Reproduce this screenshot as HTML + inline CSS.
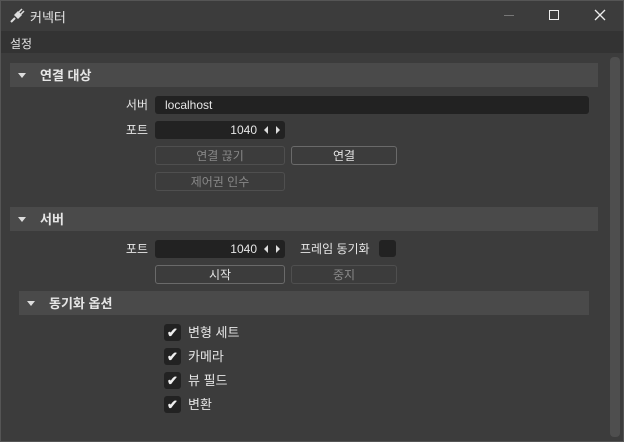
<!DOCTYPE html>
<html><head><meta charset="utf-8"><style>
*{box-sizing:border-box;margin:0;padding:0}
body{width:624px;height:442px;background:#3c3c3c;font-family:"Liberation Sans","Noto Sans CJK KR",sans-serif;font-size:12px;color:#e6e6e6;position:relative;overflow:hidden}
.a{position:absolute}
.win{left:0;top:0;width:624px;height:442px;border:1px solid #555}
.title{left:1px;top:1px;width:622px;height:30px;background:#3c3c3c}
.menu{left:1px;top:31px;width:622px;height:22px;background:#333}
.hdr{background:#4a4a4a;height:24px;font-weight:bold;font-size:13px;line-height:25px}
.tri{display:inline-block;width:0;height:0;border-left:4px solid transparent;border-right:4px solid transparent;border-top:5px solid #ddd;vertical-align:middle;margin:0 14px 2px 8px}
.inp{background:#222;border-radius:3px;height:18px;line-height:19px}
.btn{border:1px solid #6a6a6a;border-radius:3px;height:19px;line-height:18px;text-align:center;color:#e6e6e6}
.dis{border-color:#4f4f4f;color:#888}
.lbl{text-align:right;width:100px;line-height:19px}
.cb{width:17px;height:17px;background:#222;border-radius:3px;color:#eee;font-size:13px;text-align:center;line-height:17px;font-weight:bold}
</style></head><body>
<div class="a win"></div>
<div class="a title"></div>
<svg class="a" style="left:9px;top:8px" width="16" height="16" viewBox="0 0 16 16"><path d="M2 14 L6 10" stroke="#ddd" stroke-width="2"/><path d="M5 7 L9 3 L13 7 L9 11 Z" fill="#ddd"/><path d="M10 4 L13 1 M12 6 L15 3" stroke="#ddd" stroke-width="1.5"/></svg>
<div class="a" style="left:30px;top:7px;font-size:13px">커넥터</div>
<div class="a" style="left:504px;top:15px;width:10px;height:1px;background:#777"></div>
<div class="a" style="left:549px;top:10px;width:10px;height:10px;border:1.5px solid #eee"></div>
<svg class="a" style="left:594px;top:9px" width="12" height="12"><path d="M1 1L11 11M11 1L1 11" stroke="#eee" stroke-width="1.3"/></svg>
<div class="a menu"></div>
<div class="a" style="left:10px;top:35px">설정</div>
<div class="a" style="left:610px;top:57px;width:10px;height:380px;background:#4e4e4e;border-radius:4px"></div>

<div class="a hdr" style="left:10px;top:63px;width:588px"><span class="tri"></span>연결 대상</div>
<div class="a lbl" style="left:48px;top:96px">서버</div>
<div class="a inp" style="left:155px;top:96px;width:434px;padding-left:10px">localhost</div>
<div class="a lbl" style="left:48px;top:121px">포트</div>
<div class="a inp" style="left:155px;top:121px;width:130px;text-align:right;padding-right:28px">1040</div>
<svg class="a" style="left:264px;top:126px" width="16" height="8"><path d="M4 0L0 4L4 8Z M12 0L16 4L12 8Z" fill="#ddd"/></svg>
<div class="a btn dis" style="left:155px;top:146px;width:130px">연결 끊기</div>
<div class="a btn" style="left:291px;top:146px;width:106px">연결</div>
<div class="a btn dis" style="left:155px;top:172px;width:130px">제어권 인수</div>

<div class="a hdr" style="left:10px;top:207px;width:588px"><span class="tri"></span>서버</div>
<div class="a lbl" style="left:48px;top:240px">포트</div>
<div class="a inp" style="left:155px;top:240px;width:130px;text-align:right;padding-right:28px">1040</div>
<svg class="a" style="left:264px;top:245px" width="16" height="8"><path d="M4 0L0 4L4 8Z M12 0L16 4L12 8Z" fill="#ddd"/></svg>
<div class="a" style="left:300px;top:240px;line-height:19px">프레임 동기화</div>
<div class="a cb" style="left:379px;top:240px"></div>
<div class="a btn" style="left:155px;top:265px;width:130px">시작</div>
<div class="a btn dis" style="left:291px;top:265px;width:106px">중지</div>

<div class="a hdr" style="left:19px;top:291px;width:570px"><span class="tri"></span>동기화 옵션</div>
<div class="a cb" style="left:164px;top:324px">✔</div><div class="a" style="left:188px;top:324px;line-height:18px;font-size:13px">변형 세트</div>
<div class="a cb" style="left:164px;top:348px">✔</div><div class="a" style="left:188px;top:348px;line-height:18px;font-size:13px">카메라</div>
<div class="a cb" style="left:164px;top:372px">✔</div><div class="a" style="left:188px;top:372px;line-height:18px;font-size:13px">뷰 필드</div>
<div class="a cb" style="left:164px;top:396px">✔</div><div class="a" style="left:188px;top:396px;line-height:18px;font-size:13px">변환</div>
</body></html>
